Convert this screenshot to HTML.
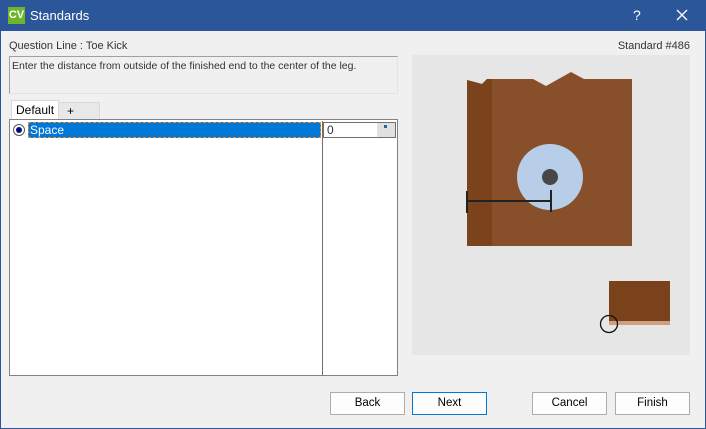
<!DOCTYPE html>
<html><head><style>
*{margin:0;padding:0;box-sizing:border-box}
body{width:706px;height:429px;overflow:hidden;background:#f0f0f0;font-family:"Liberation Sans",sans-serif;font-size:11px;color:#000;position:relative}
.a{position:absolute}
.btn{position:absolute;top:392px;width:75px;height:23px;background:#fdfdfd;border:1px solid #adadad;text-align:center;line-height:21px;font-size:11.5px;color:#000}
</style></head><body>
<div class="a" style="left:0;top:0;width:706px;height:429px;border:1px solid #2b579a"></div>
<div class="a" style="left:0;top:0;width:706px;height:31px;background:#2b579a"></div>
<div class="a" style="left:8px;top:7px;width:17px;height:17px;background:#6fb52c;color:#fff;font-weight:bold;font-size:11px;line-height:17px;text-align:center">CV</div>
<div class="a" style="left:30px;top:8px;color:#fff;font-size:13px">Standards</div>
<div class="a" style="left:633px;top:7px;color:#fff;font-size:14px">?</div>
<svg class="a" style="left:676px;top:9px" width="12" height="12"><path d="M1 1L11 11M11 1L1 11" stroke="#fff" stroke-width="1.3"/></svg>
<div class="a" style="left:9px;top:40px;color:#333">Question Line : Toe Kick</div>
<div class="a" style="right:16px;top:40px;color:#333">Standard #486</div>
<div class="a" style="left:9px;top:56px;width:389px;height:38px;border:1px solid #a0a0a0;border-right-color:#e3e3e3;border-bottom-color:#e3e3e3;background:#f0f0f0;padding:3px 2px;font-size:10.5px;color:#333">Enter the distance from outside of the finished end to the center of the leg.</div>
<div class="a" style="left:58px;top:102px;width:42px;height:18px;border:1px solid #d9d9d9;background:#e8e8e8;padding-left:8px;line-height:16px;font-size:12px">+</div>
<div class="a" style="left:11px;top:100px;width:48px;height:20px;border:1px solid #d9d9d9;border-bottom:none;background:#fff;padding-left:4px;line-height:18px;font-size:12px">Default</div>
<div class="a" style="left:9px;top:119px;width:389px;height:257px;border:1px solid #828282;background:#fff"></div>
<div class="a" style="left:322px;top:121px;width:1px;height:254px;background:#707070"></div>
<div class="a" style="left:13px;top:124px;width:12px;height:12px;border:1px solid #555;border-radius:50%;background:#fff"></div>
<div class="a" style="left:16px;top:127px;width:6px;height:6px;border-radius:50%;background:#0a0a80"></div>
<div class="a" style="left:28px;top:122px;width:293px;height:16px;background:#0078d7;border:1px dashed #f08a24;color:#fff;line-height:14px;padding-left:1px;font-size:12px">Space</div>
<div class="a" style="left:323px;top:122px;width:73px;height:16px;border:1px solid #707070;background:#fff;padding-left:3px;line-height:14px;color:#333;font-size:12px">0</div>
<div class="a" style="left:377px;top:123px;width:18px;height:14px;background:#e1e1e1"></div>
<div class="a" style="left:384px;top:125px;width:3px;height:3px;background:#3060a0"></div>
<svg class="a" style="left:412px;top:55px" width="278" height="300">
<rect width="278" height="300" fill="#e6e6e6"/>
<polygon points="55,25 70,29 75,24 121,24 134,31 159,17 172,24 220,24 220,191 55,191" fill="#87502a"/>
<polygon points="55,25 70,29 75,24 80,24 80,191 55,191" fill="#7a431c"/>
<circle cx="138" cy="122" r="33" fill="#b8cde8"/>
<circle cx="138" cy="122" r="8" fill="#474747"/>
<path d="M55 146H139M55 136V158M139 135V157" stroke="#222" stroke-width="2"/>
<rect x="197" y="226" width="61" height="44" fill="#7a421a"/>
<rect x="197" y="266" width="61" height="4" fill="#cfa080"/>
<circle cx="197" cy="269" r="8.5" fill="none" stroke="#111" stroke-width="1.3"/>
</svg>
<div class="btn" style="left:330px">Back</div>
<div class="btn" style="left:412px;border-color:#0078d7">Next</div>
<div class="btn" style="left:532px">Cancel</div>
<div class="btn" style="left:615px">Finish</div>
</body></html>
